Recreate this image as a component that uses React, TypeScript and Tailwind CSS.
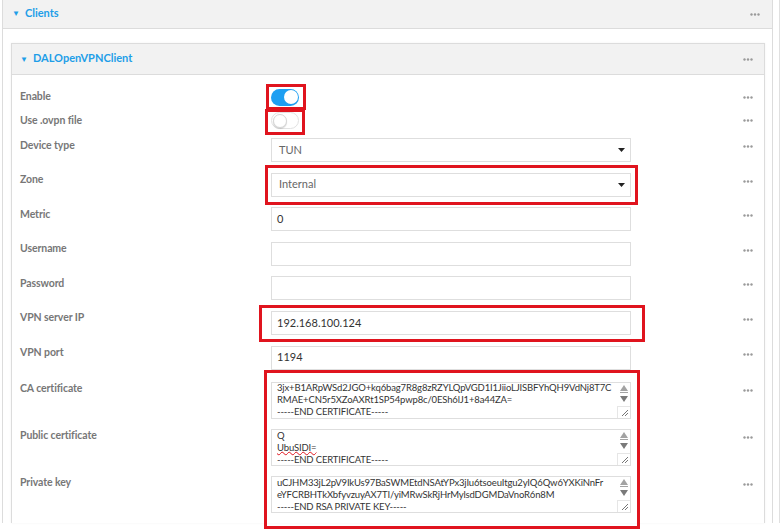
import React from 'react';

const Dots = () => (
  <svg width="10" height="3" viewBox="0 0 10 3" className="block">
    <circle cx="1.5" cy="1.5" r="1.2" fill="#9a9a9a" />
    <circle cx="5" cy="1.5" r="1.2" fill="#9a9a9a" />
    <circle cx="8.5" cy="1.5" r="1.2" fill="#9a9a9a" />
  </svg>
);

const Caret = () => (
  <svg width="7" height="4" viewBox="0 0 7 4" className="block">
    <path d="M0 0 L7 0 L3.5 4 Z" fill="#222" />
  </svg>
);

const RedBox = ({ className }: { className: string }) => (
  <div className={`absolute border-[3px] border-[#e0141e] pointer-events-none ${className}`} />
);

const Toggle = ({ on }: { on: boolean }) =>
  on ? (
    <div className="w-[28px] h-[17px] rounded-full bg-[#1e9ff2] flex items-center justify-end pr-[1.5px]">
      <div className="w-[14px] h-[14px] rounded-full bg-white" />
    </div>
  ) : (
    <div className="w-[28px] h-[17px] rounded-full bg-white border border-[#e2e2e2] flex items-center pl-[1px]">
      <div className="w-[14px] h-[14px] rounded-full bg-white border border-[#d6d6d6] shadow-[0_1px_1px_rgba(0,0,0,0.15)]" />
    </div>
  );

const Label = ({ children }: { children: React.ReactNode }) => (
  <div className="w-[251px] shrink-0 -mt-[1.5px] text-[10.5px] leading-[16px] font-bold tracking-[-0.1px] text-[#777]">
    {children}
  </div>
);

const Row = ({ label, children }: { label: string; children: React.ReactNode }) => (
  <div className="flex items-start">
    <Label>{label}</Label>
    <div className="w-[360px] shrink-0 relative">{children}</div>
    <div className="flex-1 flex justify-end pr-[11px] pt-[7px]">
      <Dots />
    </div>
  </div>
);

const TextInput = ({ value }: { value?: string }) => (
  <div className="h-[24px] border border-[#dedede] bg-white flex items-center px-[5px] text-[11px] text-[#333]">
    {value}
  </div>
);

const Select = ({ value }: { value: string }) => (
  <div className="h-[24px] border border-[#dedede] bg-white flex items-center justify-between pl-[7px] pr-[5px] text-[11px] text-[#666]">
    <span>{value}</span>
    <Caret />
  </div>
);

const TextArea = ({ lines, offset }: { lines: React.ReactNode[]; offset: string }) => (
  <div className="h-[37px] border border-[#dedede] bg-white flex overflow-hidden">
    <div className="flex-1 overflow-hidden pl-[5px] text-[9.5px] tracking-[-0.15px] leading-[12px] text-[#333]">
      <div className={offset}>
        {lines.map((l, i) => (
          <div key={i} className="whitespace-nowrap">
            {l}
          </div>
        ))}
      </div>
    </div>
    <div className="w-[13px] flex flex-col items-center">
      <div className="h-[23px] flex flex-col items-center pt-[2px]">
        <svg width="8" height="6" viewBox="0 0 8 6" className="block">
          <path d="M0 6 L4 0 L8 6 Z" fill="#a3a3a3" />
        </svg>
        <div className="w-[8px] h-[1px] bg-[#a3a3a3] mt-[1px]" />
        <svg width="8" height="6" viewBox="0 0 8 6" className="block mt-[3px]">
          <path d="M0 0 L8 0 L4 6 Z" fill="#7a7a7a" />
        </svg>
      </div>
      <div className="w-[13px] flex-1 border-l border-t border-[#e6e6e6] flex items-end justify-end pr-[2px] pb-[2px]">
        <svg width="6" height="6" viewBox="0 0 6 6" className="block">
          <path d="M6 0 L0 6 M6 3 L3 6" stroke="#666" strokeWidth="0.9" />
        </svg>
      </div>
    </div>
  </div>
);

export default function App() {
  return (
    <div className="w-[780px] h-[531px] bg-white overflow-hidden font-['Lato',sans-serif]">
      <div className="flex h-[523px]">
        <div className="ml-[2px] w-[771px] h-full border-x border-[#dcdcdc] flex flex-col">
          <div className="h-[29px] bg-[#f2f2f2] border-b border-[#dcdcdc] flex items-center justify-between pl-[9px] pr-[12px]">
            <div className="flex items-center gap-[5px] text-[11px] font-bold text-[#1e9ee8] -mt-[2px]">
              <span className="text-[8px]">▼</span>
              <span>Clients</span>
            </div>
            <Dots />
          </div>
          <div className="flex-1 pt-[14px] pl-[8px] pr-[7px]">
            <div className="h-full border-x border-t border-[#dcdcdc] shadow-[0_0_2px_rgba(0,0,0,0.06)]">
              <div className="h-[31px] bg-[#f2f2f2] border-b border-[#dcdcdc] flex items-center justify-between pl-[8px] pr-[11px]">
                <div className="flex items-center gap-[5px] text-[11px] font-bold text-[#1e9ee8] -mt-[1px]">
                  <span className="text-[8px]">▼</span>
                  <span>DALOpenVPNClient</span>
                </div>
                <Dots />
              </div>
              <div className="pl-[8px] pt-[11px] flex flex-col">
                <div className="h-[22px] flex items-center">
                  <Label>Enable</Label>
                  <div className="w-[360px] shrink-0 relative">
                    <Toggle on />
                    <RedBox className="left-[-5px] top-[-5px] w-[40px] h-[26px]" />
                  </div>
                  <div className="flex-1 flex justify-end pr-[11px]">
                    <Dots />
                  </div>
                </div>
                <div className="h-[25px] flex items-center">
                  <Label>Use .ovpn file</Label>
                  <div className="w-[360px] shrink-0 relative">
                    <Toggle on={false} />
                    <RedBox className="left-[-6px] top-[-3px] w-[40px] h-[26px]" />
                  </div>
                  <div className="flex-1 flex justify-end pr-[11px]">
                    <Dots />
                  </div>
                </div>
                <div className="mt-[5px] flex flex-col gap-[10.6px]">
                  <Row label="Device type">
                    <Select value="TUN" />
                  </Row>
                  <Row label="Zone">
                    <Select value="Internal" />
                    <RedBox className="left-[-6px] top-[-8px] w-[373px] h-[40px]" />
                  </Row>
                  <Row label="Metric">
                    <TextInput value="0" />
                  </Row>
                  <Row label="Username">
                    <TextInput />
                  </Row>
                  <Row label="Password">
                    <TextInput />
                  </Row>
                  <Row label="VPN server IP">
                    <TextInput value="192.168.100.124" />
                    <RedBox className="left-[-12px] top-[-6px] w-[386px] h-[37px]" />
                  </Row>
                  <Row label="VPN port">
                    <TextInput value="1194" />
                  </Row>
                </div>
                <div className="mt-[12.4px] flex flex-col gap-[10px] relative">
                  <Row label="CA certificate">
                    <TextArea
                      offset="-mt-[1px]"
                      lines={[
                        '3jx+B1ARpWSd2JGO+kq6bag7R8g8zRZYLQpVGD1I1JiioLJISBFYhQH9VdNj8T7C',
                        'RMAE+CN5r5XZoAXRt1SP54pwp8c/0ESh6lJ1+8a44ZA=',
                        '-----END CERTIFICATE-----',
                      ]}
                    />
                    <RedBox className="left-[-7px] top-[-12px] w-[376px] h-[159px]" />
                  </Row>
                  <Row label="Public certificate">
                    <TextArea
                      offset="mt-[0px]"
                      lines={[
                        'Q',
                        <span className="underline decoration-wavy decoration-[#e0141e] decoration-[0.6px] underline-offset-[0px]">
                          UbuSIDI=
                        </span>,
                        '-----END CERTIFICATE-----',
                      ]}
                    />
                  </Row>
                  <Row label="Private key">
                    <TextArea
                      offset="mt-[0px]"
                      lines={[
                        'uCJHM33jL2pV9IkUs97BaSWMEtdNSAtYPx3jIu6tsoeuItgu2yIQ6Qw6YXKiNnFr',
                        'eYFCRBHTkXbfyvzuyAX7TI/yiMRwSkRjHrMylsdDGMDaVnoR6n8M',
                        '-----END RSA PRIVATE KEY-----',
                      ]}
                    />
                  </Row>
                </div>
              </div>
            </div>
          </div>
        </div>
        <div className="ml-[6px] w-[1px] h-full bg-[#e0e0e0]" />
      </div>
    </div>
  );
}
